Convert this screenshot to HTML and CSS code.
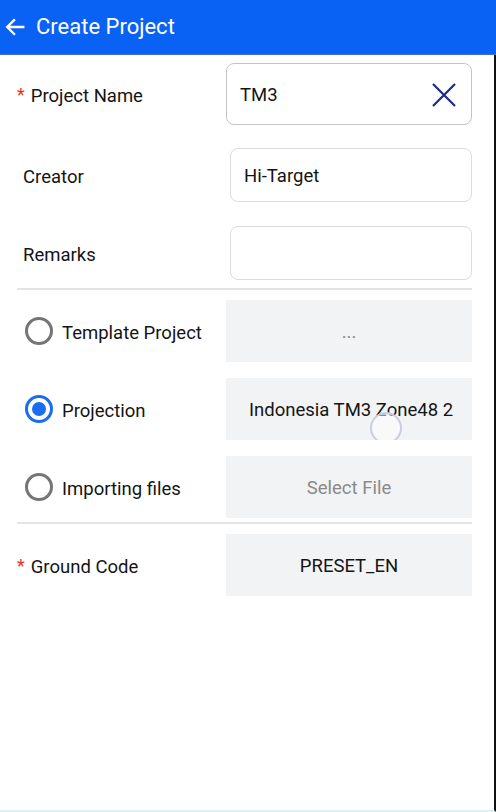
FILE: index.html
```html
<!DOCTYPE html>
<html lang="en">
<head>
    <meta charset="UTF-8">
    <meta name="viewport" content="width=device-width, initial-scale=1.0">
    <title>Create Project</title>
    <link rel="stylesheet" href="styles.css">
</head>
<body>

<header class="toolbar">
    <svg class="back" width="22" height="22" viewBox="0 0 24 24">
        <path d="M21 12H4M11 4.5L3.5 12L11 19.5" fill="none" stroke="#fff" stroke-width="2.6" stroke-linecap="square"/>
    </svg>
    <h1 class="title">Create Project</h1>
</header>

<div class="page">
    <div class="form">
        <div class="row row_name">
            <div class="label"><span class="required">*</span>Project Name</div>
            <div class="input input_active">
                <span class="text">TM3</span>
                <svg class="clear" width="26" height="26" viewBox="0 0 26 26">
                    <path d="M2 2L24 24M24 2L2 24" stroke="#1b2a8c" stroke-width="2.2"/>
                </svg>
            </div>
        </div>

        <div class="row row_plain">
            <div class="label label_inset">Creator</div>
            <div class="input input_plain"><span class="text">Hi-Target</span></div>
        </div>

        <div class="row row_plain row_remarks">
            <div class="label label_inset">Remarks</div>
            <div class="input input_plain"></div>
        </div>

        <div class="divider"></div>

        <div class="row row_option">
            <div class="label"><span class="radio"></span>Template Project</div>
            <div class="box muted">...</div>
        </div>

        <div class="row row_option">
            <div class="label"><span class="radio radio_on"></span>Projection</div>
            <div class="box box_left">
                Indonesia TM3 Zone48 2
                <span class="ripple"></span>
            </div>
        </div>

        <div class="row row_option">
            <div class="label"><span class="radio"></span>Importing files</div>
            <div class="box muted">Select File</div>
        </div>

        <div class="divider divider_low"></div>

        <div class="row row_option row_ground">
            <div class="label"><span class="required">*</span>Ground Code</div>
            <div class="box">PRESET_EN</div>
        </div>
    </div>
</div>

</body>
</html>
```

FILE: styles.css
```css
body {
    margin: 0;
    width: 496px;
    height: 812px;
    background: #FFFFFF;
    font-family: Roboto, "Noto Sans", sans-serif;
    color: #141414;
    display: flex;
    flex-direction: column;
    overflow: hidden;
}

.toolbar {
    height: 54px;
    flex: none;
    background: #0A62F4;
    border-bottom: 1px solid #3F6FC8;
    display: flex;
    align-items: center;
    padding-left: 4px;
}

.title {
    margin: 0 0 0 10px;
    font-size: 22px;
    font-weight: 400;
    color: #FFFFFF;
    padding-bottom: 2px;
}

.page {
    flex: 1;
    border-right: 2px solid #111111;
    border-bottom: 2px solid #D8F3F6;
}

.form {
    padding: 8px 22px 0 17px;
    display: flex;
    flex-direction: column;
}

.row {
    display: flex;
    align-items: center;
}

.label {
    width: 209px;
    flex: none;
    box-sizing: border-box;
    font-size: 18.5px;
    display: flex;
    align-items: center;
    padding-top: 3px;
}

.required {
    color: #E8341C;
    margin-right: 6px;
    font-size: 18px;
    position: relative;
    top: -1px;
}

.label_inset {
    padding-left: 6px;
}

/* text inputs */
.input {
    flex: 1;
    box-sizing: border-box;
    border-radius: 8px;
    display: flex;
    align-items: center;
    font-size: 18.5px;
}

.input .text {
    padding-top: 2px;
}

.input_active {
    height: 62px;
    border: 1px solid #C4C4C4;
    padding: 0 14px 0 13px;
    justify-content: space-between;
}

.clear {
    margin-top: 2px;
}

.row_plain {
    margin-top: 23px;
}

.row_plain .label {
    width: 213px;
}

.row_remarks {
    margin-top: 24px;
}

.input_plain {
    height: 54px;
    border: 1px solid #DCDCDC;
    padding: 0 13px;
}

.divider {
    height: 2px;
    background: #E4E4E4;
    margin-top: 8px;
}

.divider_low {
    margin-top: 4px;
}

/* option rows */
.row_option {
    margin-top: 16px;
}

.divider + .row_option {
    margin-top: 10px;
}

.row_option .label {
    margin-left: 8px;
    width: 201px;
}

.row_ground .label {
    margin-left: 0;
    width: 209px;
}

.box {
    flex: 1;
    height: 62px;
    background: #F2F3F5;
    display: flex;
    align-items: center;
    justify-content: center;
    font-size: 18.5px;
    padding-top: 2px;
    box-sizing: border-box;
    position: relative;
}

.box_left {
    justify-content: flex-start;
    padding-left: 23px;
    white-space: nowrap;
    overflow: hidden;
}

.muted {
    color: #8A8A8A;
}

.radio {
    width: 22px;
    height: 22px;
    flex: none;
    border: 3px solid #757575;
    border-radius: 50%;
    margin: -3px 9px 0 0;
    box-sizing: content-box;
    position: relative;
}

.radio_on {
    border-color: #1A6CF0;
}

.radio_on::after {
    content: "";
    position: absolute;
    left: 4px;
    top: 4px;
    width: 14px;
    height: 14px;
    border-radius: 50%;
    background: #1A6CF0;
}

/* touch feedback left on the projection box */
.ripple {
    position: absolute;
    left: 144px;
    top: 34px;
    width: 28px;
    height: 28px;
    border: 2px solid #C9CCE3;
    border-radius: 50%;
    background: rgba(255, 255, 255, 0.5);
}
```
